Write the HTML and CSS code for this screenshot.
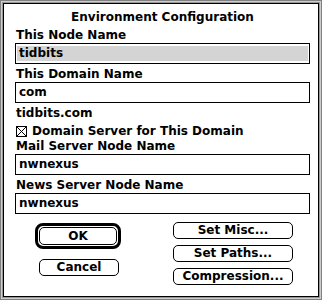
FILE: index.html
```html
<!doctype html>
<html>

<head>

<title>
Environment Configuration
</title>

<link rel="stylesheet" href="styles.css">
</head>


<body>

<div class="dialog">

<div class="dialog-title">Environment Configuration</div>

<div class="field-label">This Node Name</div>
<div class="text-field"><span class="field-text selected">tidbits</span></div>

<div class="field-label">This Domain Name</div>
<div class="text-field"><span class="field-text">com</span></div>

<div class="static-text">tidbits.com</div>

<div class="check-row">
<svg class="check-box" width="11" height="11" viewBox="0 0 11 11">
<rect x="0.5" y="0.5" width="10" height="10" fill="white" stroke="black" stroke-width="1"/>
<path d="M1 1 L10 10 M10 1 L1 10" stroke="black" stroke-width="1" shape-rendering="crispEdges"/>
</svg>
<span>Domain Server for This Domain</span>
</div>

<div class="field-label tight">Mail Server Node Name</div>
<div class="text-field"><span class="field-text">nwnexus</span></div>

<div class="field-label">News Server Node Name</div>
<div class="text-field"><span class="field-text">nwnexus</span></div>

<div class="button-area">
<div class="button-column left-column">
<div class="default-ring"><div class="push-button">OK</div></div>
<div class="push-button cancel">Cancel</div>
</div>
<div class="button-column right-column">
<div class="push-button wide">Set Misc...</div>
<div class="push-button wide">Set Paths...</div>
<div class="push-button wide">Compression...</div>
</div>
</div>

</div>

</body>
</html>
```

FILE: styles.css
```css
body {
	margin: 0;
	background: white;
}

div.dialog {
	box-sizing: border-box;
	width: 322px;
	height: 300px;
	padding: 9px 12px 0 15px;
	background: white;
	color: black;
	font-family: "DejaVu Sans", Verdana, sans-serif;
	font-weight: bold;
	font-size: 12px;
	box-shadow:
		inset 0 0 0 1px #808080,
		inset 0 0 0 2px #cccccc,
		inset 0 0 0 3px #999999,
		inset 0 0 0 4px #000000;
}

div.dialog-title {
	line-height: 16px;
	text-align: center;
	margin-bottom: 3px;
}

div.field-label,
div.static-text {
	line-height: 15px;
	padding-left: 1px;
}

div.text-field + div.field-label,
div.text-field + div.static-text {
	margin-top: 3px;
}

div.field-label.tight {
	margin-top: 0;
}

div.text-field {
	box-sizing: border-box;
	height: 21px;
	border: 1px solid black;
	padding: 2px 1px;
}

span.field-text {
	display: block;
	line-height: 15px;
	padding-left: 2px;
}

span.field-text.selected {
	background: #d4d4d4;
}

div.check-row {
	display: flex;
	align-items: center;
	gap: 5px;
	margin-top: 3px;
	line-height: 15px;
	padding-left: 1px;
}

svg.check-box {
	display: block;
	flex: none;
}

div.button-area {
	display: flex;
	margin-top: 8px;
}

div.button-column {
	display: flex;
	flex-direction: column;
}

div.left-column {
	margin-left: 20px;
	width: 86px;
	margin-top: 1px;
}

div.right-column {
	margin-left: 52px;
	gap: 6px;
}

div.push-button {
	box-sizing: border-box;
	height: 17px;
	border: 1px solid black;
	border-radius: 5px;
	line-height: 15px;
	text-align: center;
}

div.default-ring {
	box-sizing: border-box;
	width: 86px;
	height: 26px;
	border: 3px solid black;
	border-radius: 8px;
	padding: 1px;
}

div.default-ring div.push-button {
	height: 18px;
	line-height: 16px;
}

div.push-button.cancel {
	width: 80px;
	margin-top: 10px;
	margin-left: 4px;
}

div.push-button.wide {
	width: 120px;
}
```
